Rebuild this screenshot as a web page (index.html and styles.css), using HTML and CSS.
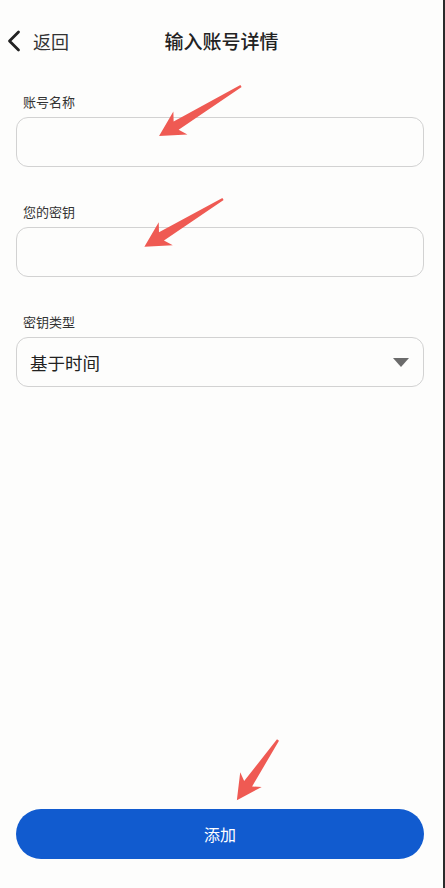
FILE: index.html
```html
<!DOCTYPE html>
<html lang="zh-CN">
<head>
    <meta charset="UTF-8">
    <meta name="viewport" content="width=device-width, initial-scale=1.0">
    <title>输入账号详情</title>
    <link rel="stylesheet" href="styles.css">
</head>
<body>

<div class="app">
    <div class="header">
        <a class="back" href="#">
            <svg class="chevron" width="14" height="22" viewBox="0 0 14 22">
                <polyline points="11.5,2 2.5,11 11.5,20" fill="none" stroke="#222" stroke-width="2.8" stroke-linecap="round" stroke-linejoin="round"/>
            </svg>
            <span>返回</span>
        </a>
        <h1 class="title">输入账号详情</h1>
    </div>

    <div class="form">
        <div class="field">
            <label class="label" for="account">账号名称</label>
            <input class="input" id="account" type="text">
        </div>
        <div class="field">
            <label class="label" for="secret">您的密钥</label>
            <input class="input" id="secret" type="text">
        </div>
        <div class="field">
            <div class="label">密钥类型</div>
            <div class="select">
                <span>基于时间</span>
                <svg width="16" height="9" viewBox="0 0 16 9">
                    <polygon points="0,0 16,0 8,9" fill="#6b6b6b"/>
                </svg>
            </div>
        </div>
    </div>

    <div class="footer">
        <button class="add-btn">添加</button>
    </div>

    <!-- annotation arrows over the screenshot -->
    <svg class="arrows" width="443" height="888" viewBox="0 0 443 888">
        <g fill="#ef5a53">
            <polygon transform="translate(241 86) rotate(148.6)" points="0,-1.2 76,-4.8 71,-13.5 96,0 71,13.5 76,4.8 0,1.2"/>
            <polygon transform="translate(223 199) rotate(148.7)" points="0,-1.2 72,-4.8 67,-13.5 92,0 67,13.5 72,4.8 0,1.2"/>
            <polygon transform="translate(278 740) rotate(124.3)" points="0,-1.2 53,-4.8 48,-13 73,0 48,13 53,4.8 0,1.2"/>
        </g>
    </svg>
</div>

</body>
</html>
```

FILE: styles.css
```css
* {
    box-sizing: border-box;
}

body {
    margin: 0;
    background-color: #2b2b2b;
    font-family: "Noto Sans CJK SC", "Noto Sans", sans-serif;
    color: #333;
}

.app {
    position: relative;
    width: 443px;
    min-height: 100vh;
    background-color: #fdfdfc;
    display: flex;
    flex-direction: column;
}

.header {
    position: relative;
    height: 82px;
    display: flex;
    align-items: center;
    justify-content: center;
}

.back {
    position: absolute;
    left: 7px;
    top: 30px;
    display: flex;
    align-items: center;
    gap: 12px;
    color: #333;
    text-decoration: none;
    font-size: 18px;
    line-height: 22px;
}

.chevron {
    display: block;
}

.title {
    margin: 0;
    font-size: 19px;
    font-weight: 500;
    color: #222;
    line-height: 24px;
}

.form {
    padding: 11px 19px 0 16px;
}

.field {
    margin-bottom: 36px;
}

.label {
    display: block;
    padding-left: 7px;
    font-size: 13px;
    line-height: 18px;
    color: #333;
    margin-bottom: 6px;
}

.input {
    display: block;
    width: 100%;
    height: 50px;
    border: 1px solid #d2d2d2;
    border-radius: 12px;
    background: transparent;
    font-family: inherit;
    font-size: 17px;
    padding: 0 14px;
    outline: none;
}

.select {
    height: 50px;
    border: 1px solid #d2d2d2;
    border-radius: 12px;
    display: flex;
    align-items: center;
    justify-content: space-between;
    padding: 0 14px 0 13px;
    font-size: 17.5px;
    color: #222;
}

.footer {
    margin-top: auto;
    padding: 0 19px 29px 16px;
}

.add-btn {
    display: block;
    width: 100%;
    height: 50px;
    border: none;
    border-radius: 25px;
    background-color: #115bcf;
    color: #fff;
    font-family: inherit;
    font-size: 16px;
    cursor: pointer;
}

.arrows {
    position: absolute;
    left: 0;
    top: 0;
    pointer-events: none;
}
```
